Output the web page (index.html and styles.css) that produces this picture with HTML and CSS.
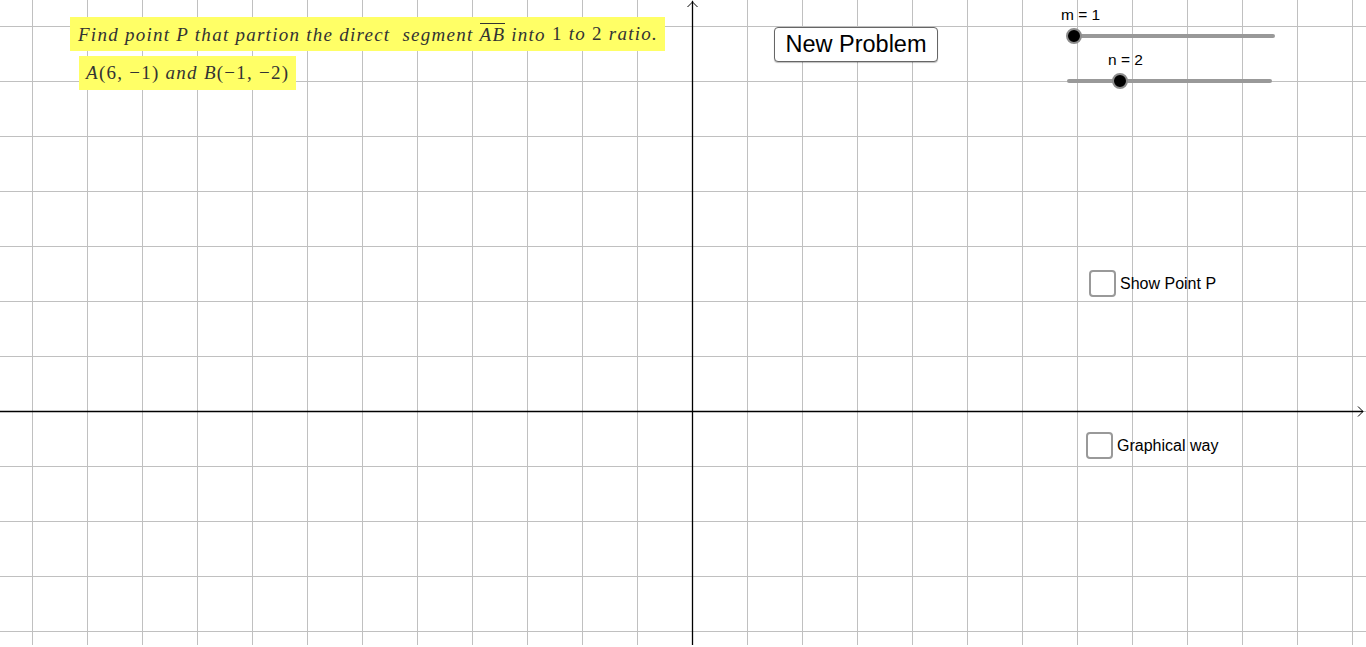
FILE: index.html
```html
<!DOCTYPE html>
<html>
<head>
<meta charset="utf-8">
<link rel="stylesheet" href="styles.css">
</head>
<body>
<div class="applet">
  <svg class="axes" width="1366" height="645" viewBox="0 0 1366 645">
    <line x1="692.5" y1="1" x2="692.5" y2="645" stroke="#000" stroke-width="1.3"/>
    <polyline points="687.5,7 692.5,2 697.5,7" fill="none" stroke="#000" stroke-width="1"/>
    <line x1="0" y1="411.5" x2="1363" y2="411.5" stroke="#000" stroke-width="1.3"/>
    <polyline points="1358,406.5 1363,411.5 1358,416.5" fill="none" stroke="#000" stroke-width="1"/>
  </svg>

  <div class="note note-problem">
    <span class="it">Find point P that partion the direct&nbsp; segment <span class="over">AB</span> into </span><span class="rm">1</span><span class="it"> to </span><span class="rm">2</span><span class="it"> ratio.</span>
  </div>
  <div class="note note-points">
    <span class="it">A</span><span class="rm">(6, −1)</span><span class="it"> and B</span><span class="rm">(−1, −2)</span>
  </div>

  <button class="btn-new">New Problem</button>

  <div class="slider slider-m">
    <div class="slider-label">m = 1</div>
    <div class="track"><div class="knob" style="left: 6px"></div></div>
  </div>
  <div class="slider slider-n">
    <div class="slider-label">n = 2</div>
    <div class="track"><div class="knob" style="left: 52px"></div></div>
  </div>

  <label class="check check-p"><span class="box"></span><span class="check-text">Show Point P</span></label>
  <label class="check check-g"><span class="box"></span><span class="check-text">Graphical way</span></label>
</div>
</body>
</html>
```
FILE: styles.css
```css
html, body {
  margin: 0;
  padding: 0;
  background: #fff;
}

.applet {
  position: relative;
  width: 1366px;
  height: 645px;
  overflow: hidden;
  background-color: #fff;
  background-image:
    linear-gradient(to right, #c0c0c0 1px, transparent 1px),
    linear-gradient(to bottom, #c0c0c0 1px, transparent 1px);
  background-size: 55px 55px;
  background-position: 32px 26px;
}

.axes {
  position: absolute;
  left: 0;
  top: 0;
}

.note {
  position: absolute;
  display: flex;
  align-items: center;
  height: 34px;
  background: #ffff66;
  color: #333;
  font-family: "Liberation Serif", "Times New Roman", serif;
  font-size: 19px;
  white-space: pre;
  letter-spacing: 1.26px;
  box-sizing: border-box;
}

.note-problem {
  left: 70px;
  top: 17px;
  width: 595px;
  padding-left: 8px;
}

.note-points {
  left: 79px;
  top: 56px;
  width: 217px;
  padding-left: 7px;
}

.it { font-style: italic; }
.rm { font-style: normal; }

.over {
  display: inline-block;
  border-top: 1px solid #333;
  line-height: 1;
  padding-top: 1px;
}

.btn-new {
  position: absolute;
  left: 774px;
  top: 27px;
  width: 164px;
  height: 35px;
  padding: 0;
  background: #fff;
  border: 1px solid #666;
  border-radius: 4px;
  box-shadow: 0 1px 1px rgba(0,0,0,0.25);
  font-family: "Liberation Sans", Arial, sans-serif;
  font-size: 23.5px;
  color: #000;
  line-height: 33px;
}

.slider {
  position: absolute;
  display: flex;
  flex-direction: column;
}

.slider-m { left: 1067px; top: 5px; width: 208px; }
.slider-n { left: 1067px; top: 50px; width: 205px; }

.slider-label {
  font-family: "Liberation Sans", Arial, sans-serif;
  font-size: 15.5px;
  color: #000;
  height: 20px;
  line-height: 20px;
}

.slider-m .slider-label { margin-left: -6px; }
.slider-n .slider-label { margin-left: 41px; }

.track {
  position: relative;
  margin-top: 9px;
  height: 4px;
  border-radius: 2px;
  background: #999;
}

.knob {
  position: absolute;
  top: 50%;
  width: 12px;
  height: 12px;
  margin: -8px 0 0 -7px;
  border-radius: 50%;
  background: #000;
  border: 2px solid #8c8c8c;
}

.check {
  position: absolute;
  display: flex;
  align-items: center;
  gap: 4px;
  font-family: "Liberation Sans", Arial, sans-serif;
  font-size: 16px;
  color: #000;
}

.check-p { left: 1089px; top: 270px; }
.check-g { left: 1086px; top: 432px; }

.box {
  width: 23px;
  height: 23px;
  border: 2px solid #999;
  border-radius: 4px;
  background: #fff;
}

.check-text { margin-top: 1px; }
```
